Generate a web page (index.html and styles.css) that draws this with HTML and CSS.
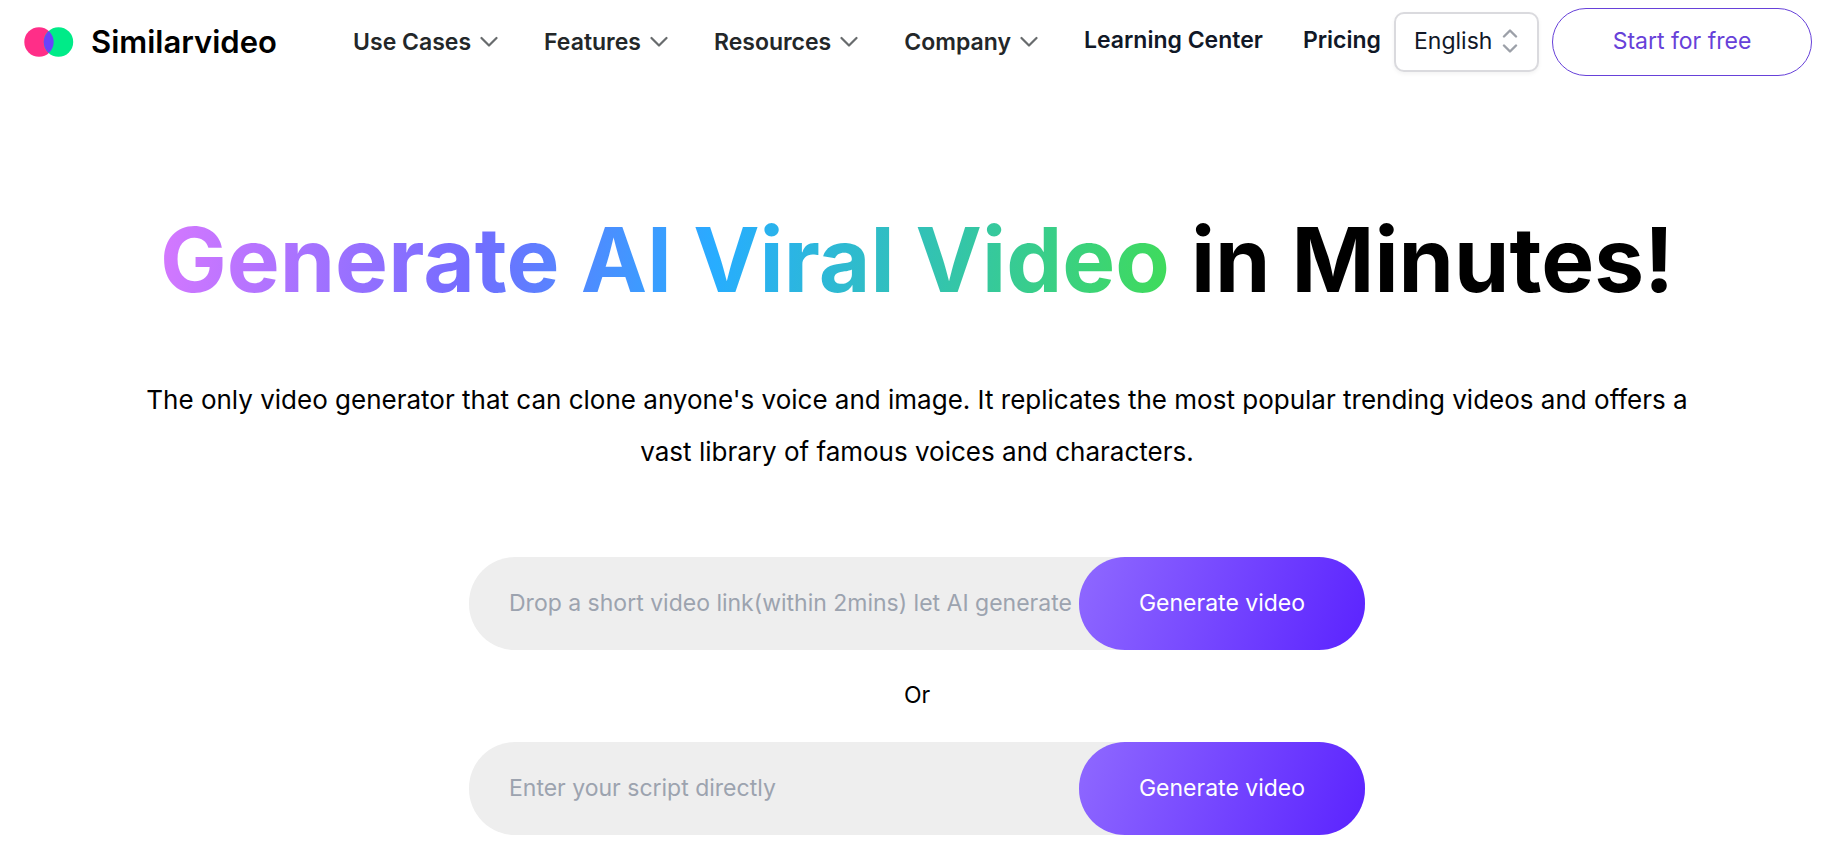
FILE: index.html
```html
<!DOCTYPE html>
<html lang="en">
<head>
	<meta charset="UTF-8">
	<meta name="viewport" content="width=device-width, initial-scale=1">
	<title>Similarvideo</title>
	<link rel="stylesheet" href="styles.css">
</head>
<body>
	<header class="header">
		<a class="logo" href="#">
			<svg class="logo-icon" width="50" height="30" viewBox="0 0 50 30" aria-hidden="true">
				<circle cx="15" cy="15" r="14.7" fill="#ff2e88"/>
				<circle cx="34.5" cy="15" r="14.7" fill="#00eb88"/>
				<path d="M24.75 4A14.7 14.7 0 0 1 24.75 26A14.7 14.7 0 0 1 24.75 4Z" fill="#6a42fb"/>
			</svg>
			<span>Similarvideo</span>
		</a>
		<nav class="nav">
			<button class="nav-item" type="button">Use Cases
				<svg class="arrow" width="18" height="12" viewBox="0 0 18 12"><path d="M1.5 2l7.5 7.5L16.5 2"/></svg>
			</button>
			<button class="nav-item" type="button">Features
				<svg class="arrow" width="18" height="12" viewBox="0 0 18 12"><path d="M1.5 2l7.5 7.5L16.5 2"/></svg>
			</button>
			<button class="nav-item" type="button">Resources
				<svg class="arrow" width="18" height="12" viewBox="0 0 18 12"><path d="M1.5 2l7.5 7.5L16.5 2"/></svg>
			</button>
			<button class="nav-item" type="button">Company
				<svg class="arrow" width="18" height="12" viewBox="0 0 18 12"><path d="M1.5 2l7.5 7.5L16.5 2"/></svg>
			</button>
			<div class="nav-links">
				<a href="#">Learning Center</a>
				<a href="#">Pricing</a>
			</div>
		</nav>
		<div class="actions">
			<div class="lang">
				<select class="lang-select" aria-label="Language">
					<option>English</option>
				</select>
				<svg class="lang-icon" width="16" height="24" viewBox="0 0 16 24"><path d="M2 7.5l6-6 6 6M2 16.5l6 6 6-6"/></svg>
			</div>
			<button class="start" type="button">Start for free</button>
		</div>
	</header>

	<main class="main">
		<h1 class="title"><span class="colorful">Generate AI Viral Video</span> in Minutes!</h1>
		<p class="desc">The only video generator that can clone anyone's voice and image. It replicates the most popular trending videos and offers a vast library of famous voices and characters.</p>
		<form class="bar">
			<input class="bar-input" type="text" aria-label="Video link" placeholder="Drop a short video link(within 2mins) let AI generate">
			<button class="bar-btn" type="button">Generate video</button>
		</form>
		<p class="or">Or</p>
		<form class="bar">
			<input class="bar-input" type="text" aria-label="Script" placeholder="Enter your script directly">
			<button class="bar-btn" type="button">Generate video</button>
		</form>
	</main>
</body>
</html>
```
FILE: styles.css
```css
*{
	box-sizing: border-box;
}
body{
	margin: 0;
	font-family: Inter, "Liberation Sans", sans-serif;
	font-size: 23px;
	color: #000;
	background-color: #fff;
}
button,input,select{
	font-family: inherit;
	font-size: inherit;
	outline: none;
}
button{
	cursor: pointer;
}
a{
	color: inherit;
	text-decoration: none;
}

.header{
	display: flex;
	align-items: center;
	padding: 8px 14px 8px 24px;
}
.logo{
	display: flex;
	align-items: center;
	gap: 17px;
	font-size: 31px;
	line-height: 36px;
	font-weight: 600;
}
.nav{
	display: flex;
	align-items: center;
	gap: 46px;
	margin-left: auto;
	font-weight: 600;
}
.nav-item{
	display: flex;
	align-items: center;
	gap: 9px;
	padding: 0;
	border: none;
	background: none;
	color: #232729;
	font-weight: 600;
}
.arrow{
	fill: none;
	stroke: #686b6d;
	stroke-width: 2.2;
	stroke-linecap: round;
	stroke-linejoin: round;
}
.nav-links{
	display: flex;
	gap: 40px;
	padding-bottom: 4px;
	color: #111827;
}
.actions{
	display: flex;
	align-items: center;
	gap: 13px;
	margin-left: 13px;
}
.lang{
	position: relative;
}
.lang-select{
	display: block;
	appearance: none;
	width: 145px;
	height: 60px;
	padding: 0 32px 2px 18px;
	border: 2px solid #dadade;
	border-radius: 10px;
	background-color: #fff;
	color: #111827;
	box-shadow: 0 2px 4px rgba(0, 0, 0, 0.05);
}
.lang-icon{
	position: absolute;
	top: 17px;
	right: 21px;
	fill: none;
	stroke: #9ca0a8;
	stroke-width: 2.4;
	stroke-linecap: round;
	stroke-linejoin: round;
	pointer-events: none;
}
.start{
	width: 260px;
	height: 68px;
	padding: 0 0 2px;
	border: 1px solid #6741d9;
	border-radius: 34px;
	background-color: #fff;
	color: #6741d9;
}

.main{
	padding: 116px 128px 0 136px;
	text-align: center;
}
.title{
	margin: 0;
	font-size: 89px;
	line-height: 120px;
	font-weight: 700;
}
.colorful{
	background: linear-gradient(100deg, #d678ff, #746cff 31%, #27adff 55%, #40dc58 100%);
	-webkit-background-clip: text;
	background-clip: text;
	color: transparent;
}
.desc{
	margin: 54px 0 79px;
	font-size: 26px;
	line-height: 52px;
}
.bar{
	display: flex;
	max-width: 896px;
	margin: 0 auto;
	border-radius: 46px;
	background-color: #eee;
}
.bar-input{
	flex: 1;
	min-width: 0;
	padding: 0 0 2px 40px;
	border: none;
	background: none;
}
.bar-input::placeholder{
	color: #9ca3af;
}
.bar-btn{
	width: 286px;
	height: 93px;
	padding: 0 0 2px;
	border: none;
	border-radius: 46px;
	background: linear-gradient(110deg, #8f69ff, #5b23ff);
	color: #fff;
}
.or{
	margin: 0;
	padding-bottom: 2px;
	line-height: 90px;
}
```
